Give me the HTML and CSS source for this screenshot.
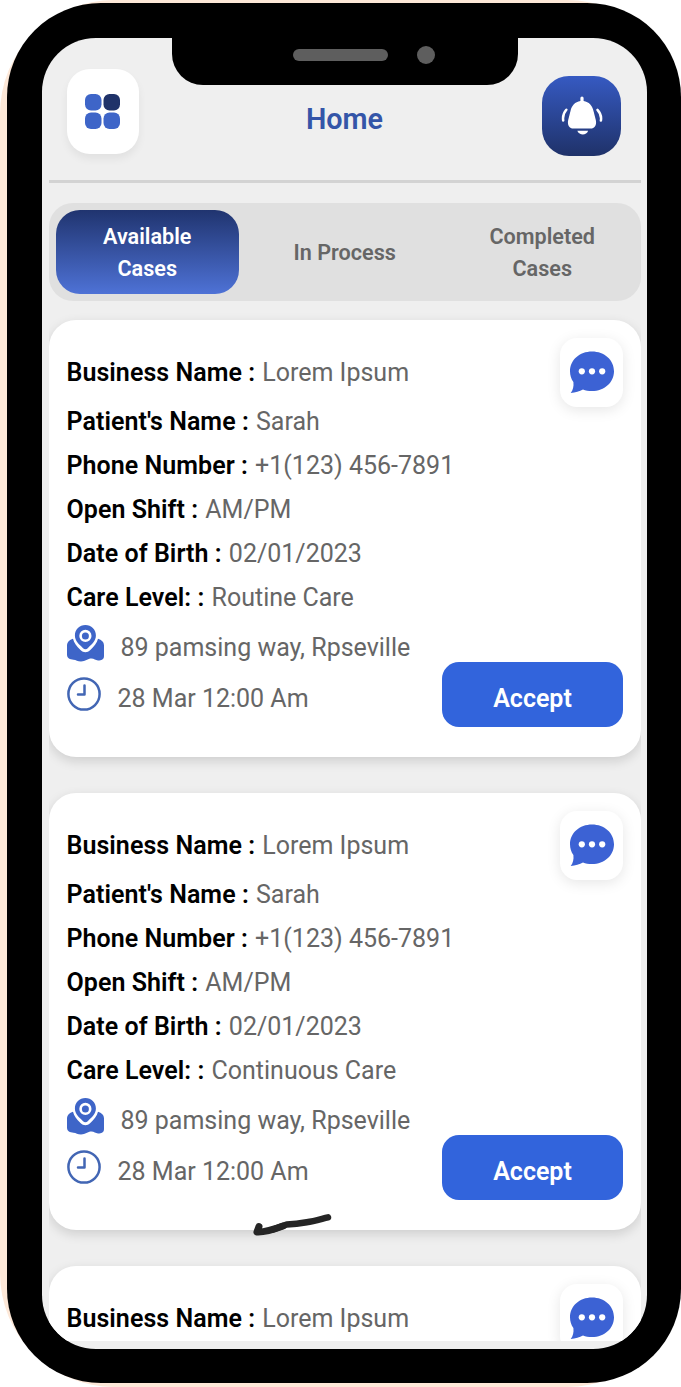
FILE: index.html
```html
<!DOCTYPE html>
<html lang="en">
<head>
    <meta charset="UTF-8">
    <meta name="viewport" content="width=device-width, initial-scale=1.0">
    <title>Home</title>
    <link rel="stylesheet" href="styles.css">
</head>
<body>
    <!-- Shared icons -->
    <svg class="icon-defs" width="0" height="0">
        <symbol id="icon-chat" viewBox="0 0 44 43">
            <path fill="#3c62d4" d="M22 0.5C34.5 0.5 44 9 44 20.2S34.5 40 22 40C18.500 40 15.500 39.500 13 38.400C9.500 40 5.500 41.600 0.700 42C3 39 3.900 35.500 3.400 31C1.200 28 0 24.400 0 20.200C0 9 9.500 0.500 22 0.500Z"/>
            <g fill="#fff">
                <circle cx="11.800" cy="20.300" r="3.100"/>
                <circle cx="22" cy="20.300" r="3.100"/>
                <circle cx="32.200" cy="20.300" r="3.100"/>
            </g>
        </symbol>
        <symbol id="icon-map" viewBox="0 0 37 37">
            <path fill="#3e65c8" d="M6 13.800C7 18.300 9.500 21 13.500 25C16.500 28 20.300 28 23.300 25C27.300 21 30 18.300 31 13.800C34.500 14.800 37 17 37 20.500V31C37 34.500 34.500 35.500 31 35.500C28.500 35.500 27 33.600 24.500 33.600C20.500 33.600 18.500 36.500 14 36.500C10.500 36.500 9 34.900 6.500 34.700C3 34.500 0 33.500 0 29.500V21C0 17 2.500 14.800 6 13.800Z"/>
            <path fill="#3e65c8" fill-rule="evenodd" d="M18.400 0C24.300 0 28.900 4.500 28.900 10.500C28.900 16 24.500 19.500 21 22.900C19.300 24.600 17.500 24.600 15.800 22.900C12.300 19.500 7.900 16 7.900 10.500C7.900 4.500 12.500 0 18.400 0ZM18.400 4.800A6.100 6.100 0 1 0 18.400 17A6.100 6.100 0 1 0 18.400 4.800Z"/>
            <circle cx="18.400" cy="10.900" r="3.500" fill="#3e65c8"/>
        </symbol>
        <symbol id="icon-clock" viewBox="0 0 34 34">
            <g fill="none" stroke="#4266b4" stroke-width="2.500">
                <circle cx="17" cy="17" r="15.600"/>
                <path stroke-linecap="round" stroke-linejoin="round" d="M17.500 8.500V17.500H11"/>
            </g>
        </symbol>
    </svg>

    <div class="case-back">
        <div class="phone">
            <div class="screen">
                <div class="header">
                    <button class="menu-button">
                        <svg width="35" height="35" viewBox="0 0 35 35">
                            <rect x="0" y="0" width="16.500" height="16.500" rx="6" fill="#3e65c8"/>
                            <rect x="18.500" y="0" width="16.500" height="16.500" rx="6" fill="#1f3269"/>
                            <rect x="0" y="18.500" width="16.500" height="16.500" rx="6" fill="#3e65c8"/>
                            <rect x="18.500" y="18.500" width="16.500" height="16.500" rx="6" fill="#3e65c8"/>
                        </svg>
                    </button>
                    <h1>Home</h1>
                    <button class="bell-button">
                        <svg width="42" height="40" viewBox="0 0 42 40">
                            <path fill="#fff" d="M19.400 5V2Q19.400 0.500 21 0.500T22.600 2V5C28 5.800 31.300 9.500 32.500 15L34.800 24C36 29 33.500 32.600 29.500 32.600H12.500C8.500 32.600 6 29 7.200 24L9.500 15C10.700 9.500 14 5.800 19.400 5Z"/>
                            <path fill="#fff" d="M16.300 34.700H27.100C25.500 39.700 18.300 39.700 16.300 34.700Z"/>
                            <path fill="none" stroke="#fff" stroke-width="2.500" stroke-linecap="round" d="M5.300 13.800C2.500 17 1.600 20.500 2.200 24.500M36.500 13.800C39.500 17 40.600 20.500 39.900 24.500"/>
                        </svg>
                    </button>
                </div>

                <div class="tabs">
                    <div class="tab active">Available<br>Cases</div>
                    <div class="tab">In Process</div>
                    <div class="tab">Completed<br>Cases</div>
                </div>

                <div class="case-list">
                    <div class="card">
                        <div class="card-head">
                            <p><b>Business Name :</b> Lorem Ipsum</p>
                            <button class="chat-button"><svg width="44" height="43"><use href="#icon-chat"/></svg></button>
                        </div>
                        <p><b>Patient's Name :</b> Sarah</p>
                        <p><b>Phone Number :</b> +1(123) 456-7891</p>
                        <p><b>Open Shift :</b> AM/PM</p>
                        <p><b>Date of Birth :</b> 02/01/2023</p>
                        <p><b>Care Level: :</b> Routine Care</p>
                        <div class="card-footer">
                            <div class="details">
                                <div class="address"><svg width="37" height="37"><use href="#icon-map"/></svg><span>89 pamsing way, Rpseville</span></div>
                                <div class="time"><svg width="34" height="34"><use href="#icon-clock"/></svg><span>28 Mar 12:00 Am</span></div>
                            </div>
                            <button class="accept-button">Accept</button>
                        </div>
                    </div>

                    <div class="card">
                        <div class="card-head">
                            <p><b>Business Name :</b> Lorem Ipsum</p>
                            <button class="chat-button"><svg width="44" height="43"><use href="#icon-chat"/></svg></button>
                        </div>
                        <p><b>Patient's Name :</b> Sarah</p>
                        <p><b>Phone Number :</b> +1(123) 456-7891</p>
                        <p><b>Open Shift :</b> AM/PM</p>
                        <p><b>Date of Birth :</b> 02/01/2023</p>
                        <p><b>Care Level: :</b> Continuous Care</p>
                        <div class="card-footer">
                            <div class="details">
                                <div class="address"><svg width="37" height="37"><use href="#icon-map"/></svg><span>89 pamsing way, Rpseville</span></div>
                                <div class="time"><svg width="34" height="34"><use href="#icon-clock"/></svg><span>28 Mar 12:00 Am</span></div>
                            </div>
                            <button class="accept-button">Accept</button>
                        </div>
                        <!-- Pen mark over the card edge -->
                        <svg class="pen-mark" width="80" height="26" viewBox="0 0 80 26">
                            <g fill="none" stroke="#252525" stroke-linecap="round" stroke-linejoin="round">
                                <path stroke-width="7" d="M6 11.500L4 17C12 17.500 22 14 30 11"/>
                                <path stroke-width="6.500" d="M20 14.500L33.700 9.500C40 9.300 48 8.300 53.700 7.200C61 6.200 68 4 75 2.300"/>
                            </g>
                        </svg>
                    </div>

                    <div class="card">
                        <div class="card-head">
                            <p><b>Business Name :</b> Lorem Ipsum</p>
                            <button class="chat-button"><svg width="44" height="43"><use href="#icon-chat"/></svg></button>
                        </div>
                    </div>
                </div>
            </div>

            <div class="notch">
                <div class="speaker"></div>
                <div class="camera"></div>
            </div>
        </div>
    </div>
</body>
</html>
```
FILE: styles.css
```css
* {
    box-sizing: border-box;
}

body {
    margin: 0;
    background-color: #fff;
    font-family: Roboto, "Liberation Sans", sans-serif;
    overflow: hidden;
}

button {
    border: none;
    padding: 0;
    font-family: inherit;
    cursor: pointer;
}

.icon-defs {
    display: none;
}

/* Phone frame */
.case-back {
    width: 681px;
    height: 1387px;
    padding: 3px 0 4px 7px;
    background-color: #fde8d8;
    border-radius: 114px;
}

.phone {
    position: relative;
    height: 1380px;
    padding: 35px 34px 34px 35px;
    background-color: #000;
    border-radius: 94px;
}

.screen {
    display: flex;
    flex-direction: column;
    height: 1311px;
    padding: 0 6px 8px 6.5px;
    background-color: #efefef;
    border-radius: 54px;
    overflow: hidden;
}

.notch {
    position: absolute;
    top: 34px;
    left: 165px;
    width: 346px;
    height: 48px;
    background-color: #000;
    border-radius: 0 0 31px 31px;
    display: flex;
    align-items: center;
    gap: 29px;
    padding: 0 0 12px 121px;
}

.speaker {
    width: 95px;
    height: 12px;
    background-color: #5e5e5e;
    border-radius: 6px;
}

.camera {
    width: 18px;
    height: 18px;
    background-color: #5e5e5e;
    border-radius: 50%;
}

/* Header */
.header {
    display: flex;
    justify-content: space-between;
    align-items: flex-start;
    flex-shrink: 0;
    height: 145px;
    padding: 31px 19.5px 0 18px;
    border-bottom: 3px solid #d3d3d3;
}

.header h1 {
    margin: 33px 0 0 8px;
    color: #3455a8;
    font-size: 28.8px;
    line-height: 34px;
    font-weight: 600;
}

.menu-button {
    display: flex;
    justify-content: center;
    align-items: center;
    width: 72px;
    height: 85px;
    background-color: #fff;
    border-radius: 23px;
    box-shadow: 0 5px 8px rgba(0, 0, 0, 0.06);
}

.bell-button {
    display: flex;
    justify-content: center;
    align-items: center;
    width: 79px;
    height: 80px;
    margin-top: 7px;
    background: linear-gradient(#365ac2, #1f3269);
    border-radius: 27px;
}

/* Tabs */
.tabs {
    display: flex;
    flex-shrink: 0;
    gap: 14px;
    height: 98px;
    margin-top: 20px;
    padding: 7px;
    background-color: #e0e0e0;
    border-radius: 24px;
}

.tab {
    flex: 1;
    display: flex;
    justify-content: center;
    align-items: center;
    padding-top: 1px;
    border-radius: 24px;
    color: #666;
    font-size: 21.6px;
    line-height: 32px;
    font-weight: 600;
    text-align: center;
}

.tab.active {
    background: linear-gradient(#20346f, #4e72d6);
    color: #fff;
}

/* Case cards */
.case-list {
    flex: 1;
    min-height: 0;
    padding-top: 18.5px;
    overflow: hidden;
}

.card {
    position: relative;
    height: 437px;
    margin-bottom: 36px;
    padding: 26px 18px 0;
    background-color: #fff;
    border-radius: 27px;
    box-shadow: 0 4px 12px rgba(0, 0, 0, 0.14);
    color: #666;
    font-size: 25px;
}

.card p {
    margin: 0;
    line-height: 44px;
    white-space: nowrap;
}

.card b {
    margin-right: 1px;
    color: #000;
    font-weight: 600;
    letter-spacing: 0.05px;
}

.card-head {
    display: flex;
    justify-content: space-between;
    align-items: center;
    height: 54px;
}

.chat-button {
    display: flex;
    justify-content: center;
    align-items: center;
    width: 63px;
    height: 69px;
    background-color: #fff;
    border-radius: 17px;
    box-shadow: 0 3px 14px rgba(0, 0, 0, 0.1);
}

.card-footer {
    display: flex;
    justify-content: space-between;
    align-items: flex-end;
    height: 107.5px;
}

.details {
    align-self: flex-start;
    white-space: nowrap;
}

.address, .time {
    display: flex;
    align-items: center;
    gap: 17px;
    height: 51px;
}

.details svg {
    margin-top: -4px;
}

.details span {
    padding-top: 4px;
}

.accept-button {
    flex-shrink: 0;
    width: 181px;
    height: 65px;
    padding-top: 7px;
    background-color: #3264dc;
    border-radius: 17px;
    color: #fff;
    font-size: 25px;
    font-weight: 600;
}

.pen-mark {
    position: absolute;
    left: 204px;
    bottom: -11px;
    overflow: visible;
}
```
